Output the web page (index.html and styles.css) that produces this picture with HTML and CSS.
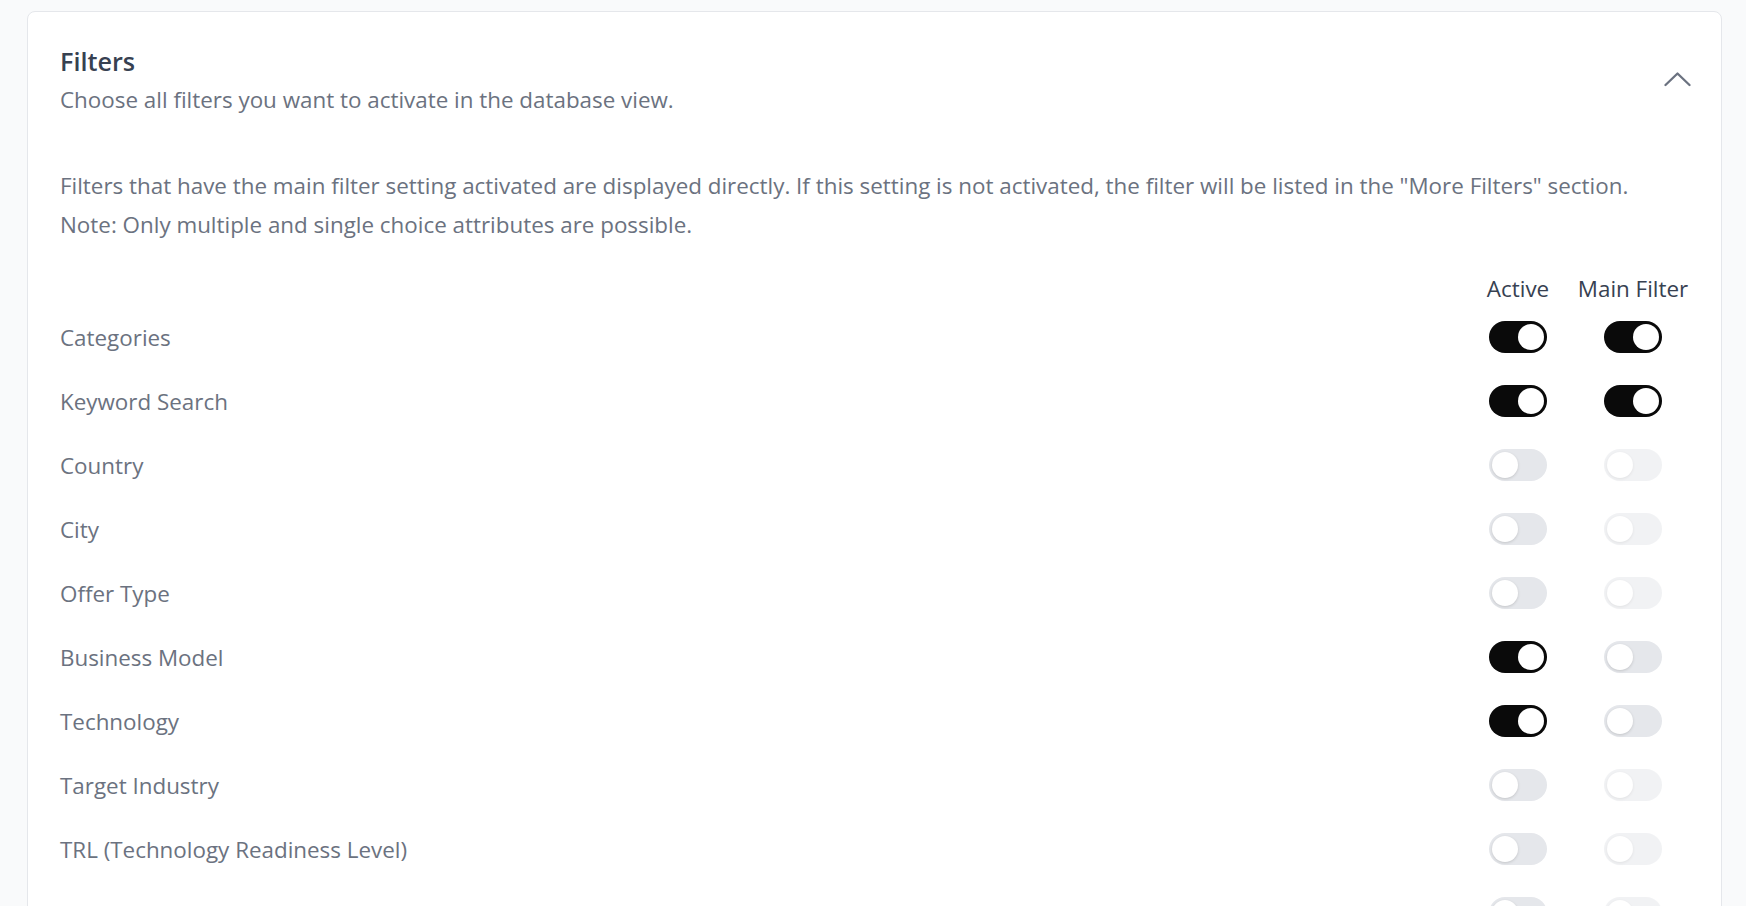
FILE: index.html
```html
<!DOCTYPE html>
<html>
<head>
<title>Filters</title>
<link rel="stylesheet" href="styles.css">
</head>
<body>
<div class="card">
  <div class="card-head">
    <div>
      <h2>Filters</h2>
      <p class="sub">Choose all filters you want to activate in the database view.</p>
    </div>
    <svg class="chevron" width="27" height="16" viewBox="0 0 27 16"><path d="M1.5 14 L13.5 2.5 L25.5 14" fill="none" stroke="#6b7280" stroke-width="2.3" stroke-linecap="round" stroke-linejoin="round"/></svg>
  </div>

  <p class="info">Filters that have the main filter setting activated are displayed directly. If this setting is not activated, the filter will be listed in the "More Filters" section.<br>Note: Only multiple and single choice attributes are possible.</p>

  <div class="row cols">
    <span class="name"></span>
    <span class="col">Active</span>
    <span class="col">Main Filter</span>
  </div>

  <div class="row">
    <span class="name">Categories</span>
    <span class="col"><span class="toggle on"></span></span>
    <span class="col"><span class="toggle on"></span></span>
  </div>
  <div class="row">
    <span class="name">Keyword Search</span>
    <span class="col"><span class="toggle on"></span></span>
    <span class="col"><span class="toggle on"></span></span>
  </div>
  <div class="row">
    <span class="name">Country</span>
    <span class="col"><span class="toggle"></span></span>
    <span class="col"><span class="toggle disabled"></span></span>
  </div>
  <div class="row">
    <span class="name">City</span>
    <span class="col"><span class="toggle"></span></span>
    <span class="col"><span class="toggle disabled"></span></span>
  </div>
  <div class="row">
    <span class="name">Offer Type</span>
    <span class="col"><span class="toggle"></span></span>
    <span class="col"><span class="toggle disabled"></span></span>
  </div>
  <div class="row">
    <span class="name">Business Model</span>
    <span class="col"><span class="toggle on"></span></span>
    <span class="col"><span class="toggle"></span></span>
  </div>
  <div class="row">
    <span class="name">Technology</span>
    <span class="col"><span class="toggle on"></span></span>
    <span class="col"><span class="toggle"></span></span>
  </div>
  <div class="row">
    <span class="name">Target Industry</span>
    <span class="col"><span class="toggle"></span></span>
    <span class="col"><span class="toggle disabled"></span></span>
  </div>
  <div class="row">
    <span class="name">TRL (Technology Readiness Level)</span>
    <span class="col"><span class="toggle"></span></span>
    <span class="col"><span class="toggle disabled"></span></span>
  </div>
  <div class="row">
    <span class="name">Attributes Hand Over</span>
    <span class="col"><span class="toggle"></span></span>
    <span class="col"><span class="toggle disabled"></span></span>
  </div>
</div>
</body>
</html>
```

FILE: styles.css
```css
html, body { margin: 0; background: #f9fafb; }
body { font-family: "Open Sans", sans-serif; color: #6b7280; }

.card {
  margin: 11px 24px 0 27px;
  padding: 32px 32px 40px;
  background: #fff;
  border: 1px solid #e5e7eb;
  border-radius: 8px;
}

.card-head { display: flex; align-items: center; justify-content: space-between; }
.card-head h2 { margin: 0; font-size: 25.2px; line-height: 34px; font-weight: 600; color: #374151; }
.sub { margin: 2px 0 0; font-size: 22.4px; line-height: 40px; }
.chevron { margin: 0 -2px 6px 0; }

.info { margin: 46px 0 0; font-size: 22.4px; line-height: 39.2px; }

.row { display: flex; align-items: center; height: 64px; font-size: 22.4px; }
.row.cols { height: 34px; margin-top: 27px; color: #374151; }
.name { flex: 1; }
.col { display: flex; justify-content: center; }
.col:nth-child(2) { width: 64px; }
.col:nth-child(3) { width: 112px; margin-left: 27px; }

.toggle {
  display: block; position: relative;
  width: 58px; height: 32px; border-radius: 16px;
  background: #e5e7eb;
}
.toggle::after {
  content: ""; position: absolute; top: 3px; left: 3px;
  width: 26px; height: 26px; border-radius: 50%;
  background: #fff;
  box-shadow: 0 1px 3px rgba(0,0,0,0.15);
}
.toggle.on { background: #0a0a0a; }
.toggle.on::after { left: 29px; box-shadow: none; }
.toggle.disabled { opacity: 0.5; }
```
